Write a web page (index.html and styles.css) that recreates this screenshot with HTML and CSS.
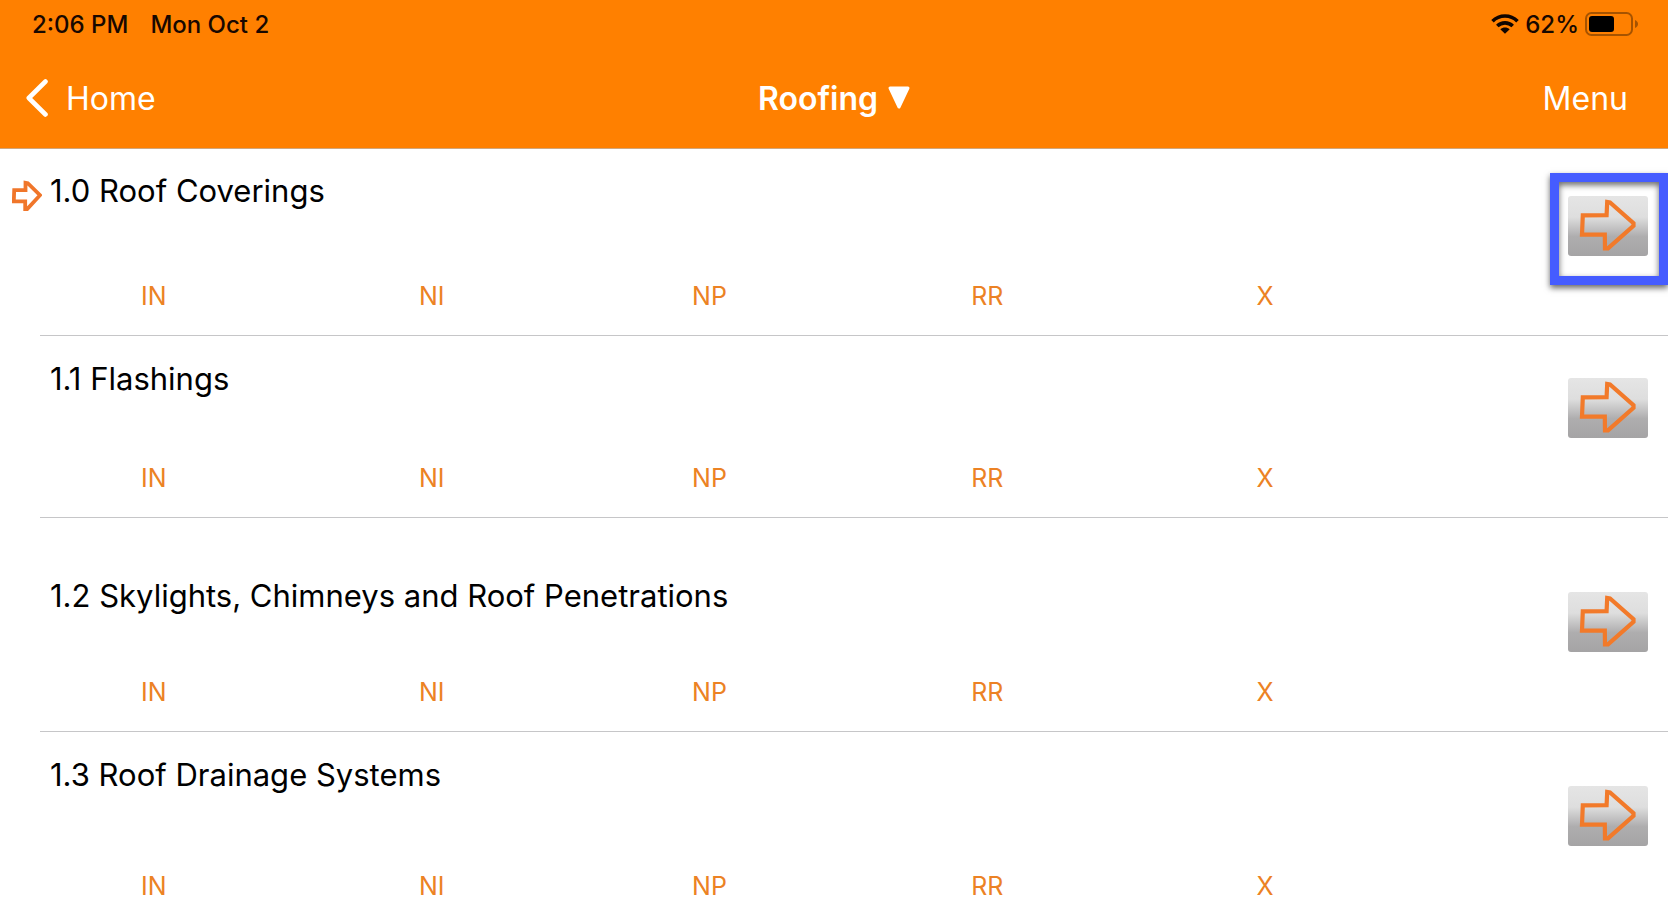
FILE: index.html
```html
<!DOCTYPE html>
<html lang="en">
<head>
<meta charset="utf-8">
<meta name="viewport" content="width=device-width, initial-scale=1">
<title>Roofing</title>
<link rel="stylesheet" href="styles.css">
</head>
<body>
<svg class="defs" width="0" height="0" aria-hidden="true">
  <symbol id="arrow" viewBox="0 0 80 60">
    <path d="M14.8 19.4 38.6 19.2 39.2 6 42 6.500 65.500 27.200V29.700L40 52.300 37 52.300 36.800 38.600 14 38.600Z" fill="none" stroke="#f27a2a" stroke-width="4.200"/>
  </symbol>
</svg>
<header class="header">
  <div class="status">
    <span>2:06 PM</span>
    <span>Mon Oct 2</span>
    <span class="status-right">
      <svg class="wifi" viewBox="0 0 28 20" aria-hidden="true">
        <g fill="none" stroke="#100500" stroke-width="3.6">
          <path d="M1.5 7.2C8.500 .3 19.500 .3 26.500 7.200"/>
          <path d="M6.300 12C10.600 7.800 17.400 7.800 21.700 12"/>
        </g>
        <path d="M14 19.800 9.300 15.200C12 12.900 16 12.900 18.700 15.200Z" fill="#100500"/>
      </svg>
      <span>62%</span>
      <svg class="battery" viewBox="0 0 54 24" aria-hidden="true">
        <rect x="1" y="1" width="46" height="22" rx="5.500" fill="none" stroke="#a65300" stroke-width="2"/>
        <rect x="4" y="4" width="25" height="16" rx="3" fill="#000"/>
        <path d="M50 8C54 9.500 54 14.500 50 16Z" fill="#a65300"/>
      </svg>
    </span>
  </div>
  <nav class="nav">
    <button class="nav-button" type="button">
      <svg class="chevron" viewBox="0 0 22 38" aria-hidden="true"><path d="M19.500 2.500 2.800 19 19.500 35.500" fill="none" stroke="#fff" stroke-width="4.600" stroke-linecap="round" stroke-linejoin="round"/></svg>
      <span>Home</span>
    </button>
    <button class="nav-button nav-title" type="button">
      <span>Roofing</span>
      <svg class="triangle" viewBox="0 0 22 24" aria-hidden="true"><path d="M2 2H20L11 21Z" fill="#fff" stroke="#fff" stroke-width="3" stroke-linejoin="round"/></svg>
    </button>
    <button class="nav-button nav-menu" type="button">Menu</button>
  </nav>
</header>
<main class="list">
  <section class="item">
    <svg class="marker" viewBox="0 0 30 32" aria-hidden="true"><path d="M2.200 10.200H13.500V2.800L15.800 3.200 28 15.200 15.200 29H13.200V21.300H1.800Z" fill="none" stroke="#f0762a" stroke-width="3.800"/></svg>
    <h2 class="item-title">1.0 Roof Coverings</h2>
    <button class="rate" type="button">IN</button>
    <button class="rate" type="button">NI</button>
    <button class="rate" type="button">NP</button>
    <button class="rate" type="button">RR</button>
    <button class="rate" type="button">X</button>
    <button class="open highlighted" type="button" aria-label="Open 1.0 Roof Coverings"><svg viewBox="0 0 80 60"><use href="#arrow"/></svg></button>
  </section>
  <section class="item">
    <h2 class="item-title">1.1 Flashings</h2>
    <button class="rate" type="button">IN</button>
    <button class="rate" type="button">NI</button>
    <button class="rate" type="button">NP</button>
    <button class="rate" type="button">RR</button>
    <button class="rate" type="button">X</button>
    <button class="open" type="button" aria-label="Open 1.1 Flashings"><svg viewBox="0 0 80 60"><use href="#arrow"/></svg></button>
  </section>
  <section class="item item-long">
    <h2 class="item-title">1.2 Skylights, Chimneys and Roof Penetrations</h2>
    <button class="rate" type="button">IN</button>
    <button class="rate" type="button">NI</button>
    <button class="rate" type="button">NP</button>
    <button class="rate" type="button">RR</button>
    <button class="rate" type="button">X</button>
    <button class="open" type="button" aria-label="Open 1.2 Skylights, Chimneys and Roof Penetrations"><svg viewBox="0 0 80 60"><use href="#arrow"/></svg></button>
  </section>
  <section class="item item-roomy">
    <h2 class="item-title">1.3 Roof Drainage Systems</h2>
    <button class="rate" type="button">IN</button>
    <button class="rate" type="button">NI</button>
    <button class="rate" type="button">NP</button>
    <button class="rate" type="button">RR</button>
    <button class="rate" type="button">X</button>
    <button class="open" type="button" aria-label="Open 1.3 Roof Drainage Systems"><svg viewBox="0 0 80 60"><use href="#arrow"/></svg></button>
  </section>
</main>
</body>
</html>
```
FILE: styles.css
```css
* { box-sizing: border-box; }

html { scrollbar-width: none; }

body {
  margin: 0;
  background: #fff;
  color: #000;
  font-family: Inter, "Liberation Sans", sans-serif;
}

button {
  margin: 0;
  padding: 0;
  border: 0;
  background: none;
  color: inherit;
  font: inherit;
  cursor: pointer;
}

svg { display: block; }

.defs { position: absolute; }

.header {
  background: #ff8000;
  border-bottom: 1px solid #d0a67c;
}

.status {
  display: flex;
  align-items: center;
  gap: 22px;
  height: 48px;
  padding: 0 29px 0 32px;
  color: #180800;
  font-size: 24px;
  font-weight: 500;
}

.status-right {
  display: flex;
  align-items: center;
  gap: 6px;
  margin-left: auto;
}

.wifi { width: 28px; height: 20px; }
.battery { width: 54px; height: 24px; }

.nav {
  display: grid;
  grid-template-columns: 1fr auto 1fr;
  align-items: center;
  height: 100px;
  padding: 0 26px;
  color: #fff;
  font-size: 32px;
}

.nav-button {
  display: flex;
  align-items: center;
  gap: 18px;
  justify-self: start;
}

.nav-title {
  gap: 10px;
  font-weight: 600;
}

.nav-menu {
  justify-self: end;
  padding-right: 14px;
}

.chevron { width: 22px; height: 38px; }
.triangle { width: 22px; height: 24px; }

.item {
  position: relative;
  display: grid;
  grid-template-columns: repeat(5, 1fr) 264px;
  grid-template-rows: 1fr auto;
  min-height: 182px;
  padding: 23px 0 20px 15px;
}

.item:first-child { min-height: 187px; padding-top: 22px; }
.item-long { min-height: 214px; padding-top: 58px; }
.item-roomy { min-height: 194px; }

.item::after {
  content: "";
  position: absolute;
  right: 0;
  bottom: 0;
  left: 40px;
  height: 1px;
  background: #c6c6c8;
}

.marker {
  position: absolute;
  top: 31px;
  left: 12px;
  width: 30px;
  height: 32px;
}

.item-title {
  grid-column: 1 / 6;
  margin: 0;
  padding-left: 35px;
  font-size: 31px;
  font-weight: 400;
  line-height: 40px;
}

.rate {
  grid-row: 2;
  height: 40px;
  color: #ec8224;
  font-size: 25px;
  line-height: 40px;
}

.open {
  position: relative;
  grid-column: 6;
  grid-row: 1 / 3;
  align-self: end;
  justify-self: end;
  width: 80px;
  height: 60px;
  margin: 0 20px 60px 0;
  border-radius: 3px;
  background: linear-gradient(#e5e5e5 0%, #dedede 35%, #aeadae 68%, #a5a4a5 100%);
}

.highlighted::after {
  content: "";
  position: absolute;
  inset: -23px -20px -29px -18px;
  border: 9px solid #455cff;
  box-shadow: 0 3px 6px rgba(0, 0, 0, 0.6), inset 0 3px 6px rgba(0, 0, 0, 0.6);
}
```
